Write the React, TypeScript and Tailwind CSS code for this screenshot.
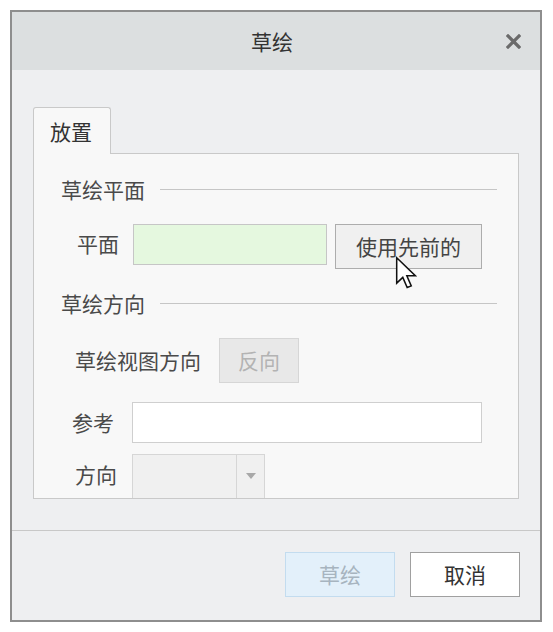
import React from "react";

const font = { fontFamily: '"Noto Sans CJK SC", "Noto Sans", sans-serif' };

function SectionHeader({ text }: { text: string }) {
  return (
    <div className="flex h-[24px] items-center">
      <span className="text-[21px] leading-none text-[#4a4a4a]">{text}</span>
      <div className="ml-[15px] mr-[21px] h-px flex-1 bg-[#c6c6c6]" />
    </div>
  );
}

export default function App() {
  return (
    <div className="h-[632px] w-[553px] bg-white pl-[10px] pt-[10px]" style={font}>
      <div className="relative flex h-[612px] w-[532px] flex-col border-2 border-[#8e8e8e] bg-[#eeeff1]">
        {/* title bar */}
        <div className="flex h-[58px] items-center bg-[#dcdfe0]">
          <div className="flex-1 pl-[44px] text-center text-[21px] leading-none text-[#333]">草绘</div>
          <div className="flex w-[52px] items-center justify-center pr-[2px]">
            <svg width="15" height="15" viewBox="0 0 15 15">
              <path d="M2 2 L13 13 M13 2 L2 13" stroke="#6b6b6b" strokeWidth="3.2" strokeLinecap="square" />
            </svg>
          </div>
        </div>

        {/* body */}
        <div className="flex h-[460px] flex-col pl-[21px] pr-[21px] pt-[37px]">
          {/* tab */}
          <div className="relative z-10 -mb-px flex h-[47px] w-[78px] items-center rounded-t-[3px] border border-b-0 border-[#c9c9c9] bg-[#f8f8f8] pl-[16px] text-[21px] leading-none text-[#333]">
            放置
          </div>
          <div className="h-[346px] overflow-hidden border border-[#c9c9c9] bg-[#f8f8f8] pl-[27px] pt-[23px]">
            <SectionHeader text="草绘平面" />
            <div className="relative mt-[23px] flex items-start">
              <span className="ml-[16px] mt-[9px] w-[56px] text-[21px] leading-none text-[#4a4a4a]">平面</span>
              <div className="h-[41px] w-[194px] border border-[#c6c6c6] bg-[#e5f8df]" />
              <div className="ml-[8px] flex h-[45px] w-[147px] items-center justify-center border border-[#adadad] bg-[#f0f0f0] text-[21px] leading-none text-[#444]">
                使用先前的
              </div>
              <svg className="absolute left-[334px] top-[32px]" width="22" height="34" viewBox="0 0 13 20">
                <path d="M1 1 L1 16 L4.6 12.6 L7.2 18.6 L9.6 17.6 L7 11.6 L12 11.6 Z" fill="#fff" stroke="#111" strokeWidth="0.9" strokeLinejoin="miter" />
              </svg>
            </div>
            <div className="mt-[22px]">
              <SectionHeader text="草绘方向" />
            </div>
            <div className="mt-[23px] flex items-center">
              <span className="ml-[14px] text-[21px] leading-none text-[#4a4a4a]">草绘视图方向</span>
              <div className="ml-[18px] flex h-[45px] w-[80px] items-center justify-center border border-[#d6d6d6] bg-[#e8e8e8] text-[21px] leading-none text-[#b3b3b3]">
                反向
              </div>
            </div>
            <div className="mt-[19px] flex items-center">
              <span className="ml-[11px] w-[60px] text-[21px] leading-none text-[#4a4a4a]">参考</span>
              <div className="h-[41px] w-[350px] border border-[#cfcfcf] bg-white" />
            </div>
            <div className="mt-[11px] flex items-start">
              <span className="ml-[14px] mt-[10px] w-[57px] text-[21px] leading-none text-[#4a4a4a]">方向</span>
              <div className="flex h-[52px] w-[133px] border border-[#d6d6d6] bg-[#f0f0f0]">
                <div className="flex-1" />
                <div className="flex w-[28px] justify-center border-l border-[#d6d6d6] pt-[18px]">
                  <svg width="10" height="6" viewBox="0 0 10 6">
                    <path d="M0 0 L10 0 L5 6 Z" fill="#a8a8a8" />
                  </svg>
                </div>
              </div>
            </div>
          </div>
        </div>

        {/* footer */}
        <div className="flex flex-1 items-start justify-end border-t border-[#c8c8c8] pr-[20px] pt-[21px]">
          <div className="flex h-[45px] w-[110px] items-center justify-center border border-[#c3dcef] bg-[#e3f0fa] text-[21px] leading-none text-[#a7b4bf]">
            草绘
          </div>
          <div className="ml-[15px] flex h-[45px] w-[110px] items-center justify-center border border-[#a0a0a0] bg-white text-[21px] leading-none text-[#333]">
            取消
          </div>
        </div>
      </div>
    </div>
  );
}
